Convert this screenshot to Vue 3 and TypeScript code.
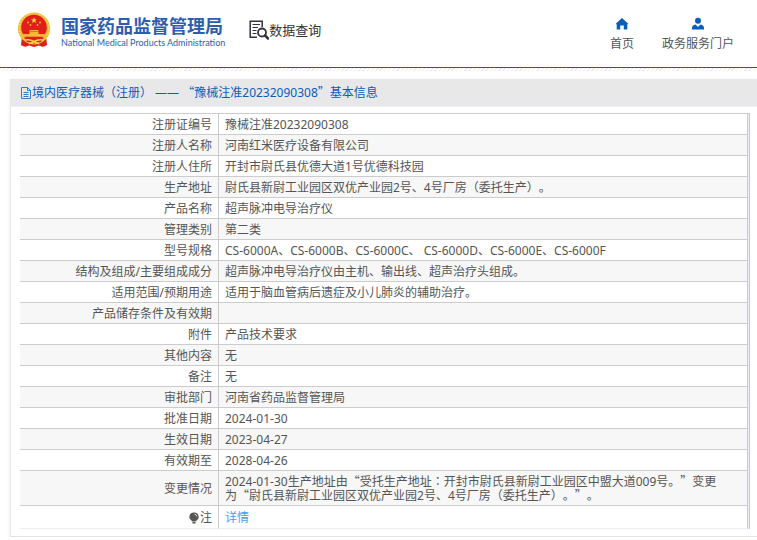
<script setup lang="ts">
interface Row {
  label: string
  value: string
}

interface Segment {
  text: string
  kind: 'plain' | 'wide' | 'centered'
}

const title = '境内医疗器械（注册） —— “豫械注准20232090308”基本信息'

const rows: Row[] = [
  { label: '注册证编号', value: '豫械注准20232090308' },
  { label: '注册人名称', value: '河南红米医疗设备有限公司' },
  { label: '注册人住所', value: '开封市尉氏县优德大道1号优德科技园' },
  { label: '生产地址', value: '尉氏县新尉工业园区双优产业园2号、4号厂房（委托生产）。' },
  { label: '产品名称', value: '超声脉冲电导治疗仪' },
  { label: '管理类别', value: '第二类' },
  { label: '型号规格', value: 'CS-6000A、CS-6000B、CS-6000C、 CS-6000D、CS-6000E、CS-6000F' },
  { label: '结构及组成/主要组成成分', value: '超声脉冲电导治疗仪由主机、输出线、超声治疗头组成。' },
  { label: '适用范围/预期用途', value: '适用于脑血管病后遗症及小儿肺炎的辅助治疗。' },
  { label: '产品储存条件及有效期', value: '' },
  { label: '附件', value: '产品技术要求' },
  { label: '其他内容', value: '无' },
  { label: '备注', value: '无' },
  { label: '审批部门', value: '河南省药品监督管理局' },
  { label: '批准日期', value: '2024-01-30' },
  { label: '生效日期', value: '2023-04-27' },
  { label: '有效期至', value: '2028-04-26' },
  {
    label: '变更情况',
    value:
      '2024-01-30生产地址由“受托生产地址：开封市尉氏县新尉工业园区中盟大道009号。”变更为“尉氏县新尉工业园区双优产业园2号、4号厂房（委托生产）。”。',
  },
]

// Quotes take the full-width CJK form; colons sit centred in their cell.
function segments(text: string): Segment[] {
  return text
    .split(/([“”]|：)/)
    .filter((part) => part !== '')
    .map((part) => ({
      text: part,
      kind: part === '：' ? 'centered' : /^[“”]/.test(part) ? 'wide' : 'plain',
    }))
}
</script>

<template>
  <div class="page">
    <header class="top">
      <a class="brand" href="#">
        <svg class="emblem" viewBox="0 0 34 36" aria-hidden="true">
          <path d="M5 24 L4 33 Q8 36 12 33.500 L17 35 L22 33.500 Q26 36 30 33 L29 24Z" fill="#d9201c" />
          <circle cx="17" cy="16.500" r="16" fill="#f0b429" />
          <circle cx="17" cy="16.500" r="14.600" fill="none" stroke="#f9d65a" stroke-width="1.400" stroke-dasharray="2 1" />
          <circle cx="17" cy="15.500" r="12.800" fill="#e01f1b" />
          <path d="M17 5.200 l.8 2.100 2.200.1 -1.700 1.400 .6 2.200 -1.900-1.200 -1.900 1.200 .6-2.200 -1.700-1.400 2.200-.1z" fill="#fbd23c" />
          <g fill="#f7b733">
            <circle cx="11" cy="10.500" r="1" /><circle cx="23" cy="10.500" r="1" />
            <circle cx="13.500" cy="13" r=".9" /><circle cx="20.500" cy="13" r=".9" />
            <path d="M13 18 h8 l1 1.500 h-10z M12.500 20 h9 v2 h-9z M6 22 h22 v2.800 h-22z" />
          </g>
          <path d="M7 25.500 Q12 25 17 28 Q22 25 27 25.500 L24 30 Q20 30 17 31.500 Q14 30 10 30Z" fill="#d9201c" />
          <path d="M8 28 Q13 27 17 29.500 Q21 27 26 28 M12 32 Q17 28 22 32" fill="none" stroke="#f8cf47" stroke-width="1.500" />
        </svg>
        <span class="names">
          <strong class="name-zh">国家药品监督管理局</strong>
          <span class="name-en">National Medical Products Administration</span>
        </span>
      </a>
      <a class="query" href="#">
        <svg class="query-icon" viewBox="0 0 20 20" fill="none" stroke="#33333f" aria-hidden="true">
          <path d="M8 17.200 H1.200 V1.200 H13.200 V7" stroke-width="1.500" />
          <path d="M3.500 4.500 H11 M3.500 7.500 H9 M3.500 10.500 H7.500 M3.500 13.500 H7.500" stroke-width="1.200" />
          <circle cx="13" cy="12.500" r="4" stroke-width="1.800" />
          <path d="M16 15.500 L19 18.500" stroke-width="2.500" stroke-linecap="round" />
        </svg>
        <span>数据查询</span>
      </a>
      <nav class="links">
        <a href="#">
          <svg class="nav-icon" viewBox="0 0 14 14" fill="#0a5dbb" aria-hidden="true">
            <path d="M7 1 L13.200 6.800 L12.300 7.500 V12.500 H8.800 V8.500 H5.200 V12.500 H1.700 V7.500 L.8 6.800Z" />
          </svg>
          <span>首页</span>
        </a>
        <a href="#">
          <svg class="nav-icon" viewBox="0 0 14 14" fill="#0a5dbb" aria-hidden="true">
            <circle cx="7" cy="3.800" r="3" />
            <path d="M1 12.500 V11 Q1 8 4.500 7.500 L7 10 L9.500 7.500 Q13 8 13 11 V12.500Z" />
          </svg>
          <span>政务服务门户</span>
        </a>
      </nav>
    </header>
    <div class="stripe"></div>

    <main class="card">
      <h1 class="card-title">
        <svg class="doc-icon" viewBox="0 0 12 12" fill="none" stroke="#0a5dbb" aria-hidden="true">
          <path d="M1.500 .5 H7.500 L10.500 3.500 V11.500 H1.500Z M7.500 .5 V3.500 H10.500 M3.500 5.500 H8.500 M3.500 7.500 H8.500 M3.500 9.500 H8.500" stroke-width=".8" />
        </svg>
        <span><span v-for="(s, i) in segments(title)" :key="i" :class="s.kind">{{ s.text }}</span></span>
      </h1>
      <div class="card-body">
        <div class="frame">
          <table class="details">
            <tbody>
              <tr v-for="row in rows" :key="row.label">
                <th scope="row">{{ row.label }}</th>
                <td><span v-for="(s, i) in segments(row.value)" :key="i" :class="s.kind">{{ s.text }}</span></td>
              </tr>
              <tr class="note">
                <th scope="row">
                  <svg class="bulb" viewBox="0 0 10 12" aria-hidden="true">
                    <path d="M5 .5 A4.300 4.300 0 0 1 7.500 8.500 L7 9.500 H3 L2.500 8.500 A4.300 4.300 0 0 1 5 .5Z M3.500 10 H6.500 V11.500 H3.500Z" fill="#555" />
                    <path d="M5.500 2 Q7.500 2.500 7.800 4.500" fill="none" stroke="#fff" stroke-width=".8" />
                  </svg>注
                </th>
                <td><a class="more" href="#">详情</a></td>
              </tr>
            </tbody>
          </table>
        </div>
      </div>
    </main>
  </div>
</template>

<style>
body {
  margin: 0;
  background: #fff;
}
</style>

<style scoped>
.page {
  font-family: "Noto Sans", "Noto Sans CJK SC", sans-serif;
  font-size: 12px;
  line-height: 14px;
  color: #555;
  text-spacing-trim: space-all;
  overflow-x: hidden;
}

a {
  color: inherit;
  text-decoration: none;
}

svg {
  flex: none;
}

.wide {
  font-family: "Noto Sans CJK SC", sans-serif;
  line-height: 0;
}

.centered {
  font-family: "Noto Sans CJK TC", sans-serif;
  line-height: 0;
}

.top {
  display: flex;
  align-items: flex-start;
  padding: 12px 23px 0 17px;
  height: 55px;
  border-bottom: 1px solid #0a5dbb;
}

.brand {
  display: flex;
  gap: 10px;
  color: #2d5dae;
}

.emblem {
  width: 34px;
  height: 36px;
}

.names {
  display: flex;
  flex-direction: column;
  padding-top: 4px;
}

.name-zh {
  font-size: 18px;
  line-height: 20px;
}

.name-en {
  font-family: Lato, sans-serif;
  font-size: 9px;
  line-height: 14px;
}

.query {
  display: flex;
  align-items: center;
  margin: 8px 0 0 24px;
  font-size: 13px;
  line-height: 20px;
  color: #333;
}

.query-icon {
  width: 20px;
  height: 20px;
}

.links {
  display: flex;
  gap: 28px;
  margin-left: auto;
  padding-top: 5px;
}

.links a {
  display: flex;
  flex-direction: column;
  align-items: center;
  gap: 6px;
}

.nav-icon {
  width: 14px;
  height: 14px;
}

.stripe {
  height: 3px;
  background: repeating-linear-gradient(135deg, #ececec 0 1px, #fff 1px 3px);
}

.card {
  margin: 8px 0 0 10px;
  border-left: 1px solid #e8e8e8;
  border-bottom: 1px solid #e4e4e4;
  box-shadow: 0 1px 4px rgba(0, 0, 0, 0.08);
}

.card-title {
  display: flex;
  align-items: center;
  height: 27px;
  margin: 0;
  padding-left: 9px;
  background: #e8e8e8;
  border-bottom: 1px solid #ebeef5;
  font-size: 12px;
  font-weight: 400;
  color: #0a5dbb;
}

.doc-icon {
  width: 12px;
  height: 12px;
}

.card-body {
  padding: 6px 7px 7px 9px;
}

.frame {
  padding-right: 1px;
  border-top: 1px solid #ccc;
  border-right: 1px solid #c8c9cf;
  background: #ebeef5;
}

.details {
  width: 100%;
  border-spacing: 0;
  background: #fff;
}

.details th,
.details td {
  padding: 4px 6px 2px;
  border-right: 1px solid #ccc;
  border-bottom: 1px solid #ccc;
  font-weight: 400;
}

.details th {
  width: 186px;
  text-align: right;
}

.details td {
  text-align: left;
}

.details tr:nth-child(even) {
  background: #f7f7f7;
}

.details .note {
  background: #fff;
}

.details .note th,
.details .note td {
  padding: 5px 6px 3px;
  border-bottom-color: #ebeef5;
}

.bulb {
  width: 10px;
  height: 12px;
  margin-right: 1px;
  vertical-align: -2px;
}

.more {
  color: #409eff;
}
</style>
